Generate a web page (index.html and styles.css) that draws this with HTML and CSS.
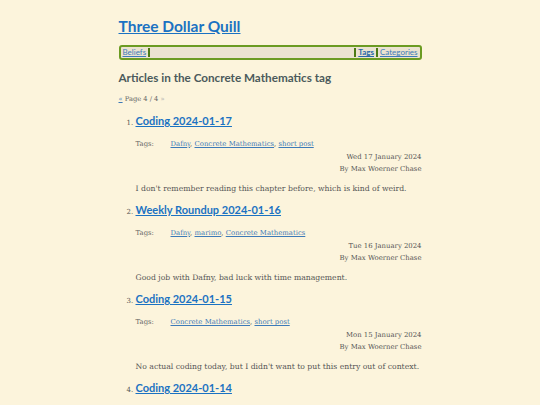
FILE: index.html
```html
<!DOCTYPE html>
<html>
<head>
<meta charset="utf-8">
<link rel="stylesheet" href="styles.css">
</head>
<body>
<div class="page">
  <header class="site-header">
    <h1 class="site-title"><a href="#">Three Dollar Quill</a></h1>
    <nav class="nav">
      <a href="#" class="nav-link">Beliefs</a><span class="sep"></span>
      <span class="nav-fill"></span>
      <span class="sep"></span><a href="#" class="nav-link current">Tags</a><span class="sep"></span><a href="#" class="nav-link">Categories</a>
    </nav>
  </header>
  <h2 class="page-heading">Articles in the Concrete Mathematics tag</h2>
  <p class="pager"><a href="#">«</a> Page 4 / 4 <span class="dim">»</span></p>
  <ol class="articles">
    <li class="article">
      <h3 class="article-title"><a href="#">Coding 2024-01-17</a></h3>
      <div class="tags"><span class="tags-label">Tags:</span><span class="tags-list"><a href="#">Dafny</a>, <a href="#">Concrete Mathematics</a>, <a href="#">short post</a></span></div>
      <div class="meta"><div>Wed 17 January 2024</div><div>By Max Woerner Chase</div></div>
      <p class="summary">I don't remember reading this chapter before, which is kind of weird.</p>
    </li>
    <li class="article">
      <h3 class="article-title"><a href="#">Weekly Roundup 2024-01-16</a></h3>
      <div class="tags"><span class="tags-label">Tags:</span><span class="tags-list"><a href="#">Dafny</a>, <a href="#">marimo</a>, <a href="#">Concrete Mathematics</a></span></div>
      <div class="meta"><div>Tue 16 January 2024</div><div>By Max Woerner Chase</div></div>
      <p class="summary">Good job with Dafny, bad luck with time management.</p>
    </li>
    <li class="article">
      <h3 class="article-title"><a href="#">Coding 2024-01-15</a></h3>
      <div class="tags"><span class="tags-label">Tags:</span><span class="tags-list"><a href="#">Concrete Mathematics</a>, <a href="#">short post</a></span></div>
      <div class="meta"><div>Mon 15 January 2024</div><div>By Max Woerner Chase</div></div>
      <p class="summary">No actual coding today, but I didn't want to put this entry out of context.</p>
    </li>
    <li class="article">
      <h3 class="article-title"><a href="#">Coding 2024-01-14</a></h3>
    </li>
  </ol>
</div>
</body>
</html>
```
FILE: styles.css
```css
html, body {
  margin: 0;
  padding: 0;
  background: #fcf4dc;
}
body {
  font-family: "DejaVu Serif", serif;
  color: #555;
  font-size: 7px;
}
.page {
  width: 303px;
  margin: 0 auto;
  padding-top: 14px;
}
.site-title {
  margin: 0;
  font-family: Lato, sans-serif;
  font-size: 15.5px;
  font-weight: 700;
  line-height: 24px;
}
.site-title a {
  color: #1b72c2;
}
.nav {
  margin-top: 7px;
  display: flex;
  align-items: center;
  height: 11px;
  border: 2px solid #6b9b22;
  border-radius: 3px;
  background: #ebe3d0;
  padding: 0 2px;
  font-family: Lato, sans-serif;
  font-size: 8px;
}
.nav-link {
  color: #3d7ab8;
  line-height: 11px;
}
.nav-link.current {
  font-weight: 700;
  color: #2868a8;
}
.sep {
  width: 2px;
  height: 9px;
  background: #4c7a14;
  margin: 0 2px;
}
.nav-fill {
  flex: 1;
}
.page-heading {
  margin: 8px 0 0;
  font-family: Lato, sans-serif;
  font-size: 11.7px;
  font-weight: 700;
  color: #4b5a5b;
  line-height: 18px;
}
.pager {
  margin: 8px 0 0;
  font-size: 6.7px;
  line-height: 10px;
  color: #666;
}
.pager a {
  color: #3d7ab8;
}
.pager .dim {
  color: #aaa;
}
.articles {
  margin: 8px 0 0;
  padding-left: 17px;
  font-size: 7px;
}
.article {
  margin-bottom: 7px;
}
.article-title {
  margin: 0;
  font-family: Lato, sans-serif;
  font-size: 11px;
  font-weight: 700;
  line-height: 18px;
}
.article-title a {
  color: #1b72c2;
}
.tags {
  margin-top: 9px;
  display: flex;
  font-size: 6.9px;
  line-height: 10px;
}
.tags-label {
  width: 35px;
  color: #666;
}
.tags-list a {
  color: #3d7ab8;
}
.meta {
  text-align: right;
  font-size: 6.9px;
  line-height: 12px;
  margin-top: 2px;
}
.summary {
  margin: 9px 0 0;
  font-size: 7.7px;
  line-height: 10px;
}
```
